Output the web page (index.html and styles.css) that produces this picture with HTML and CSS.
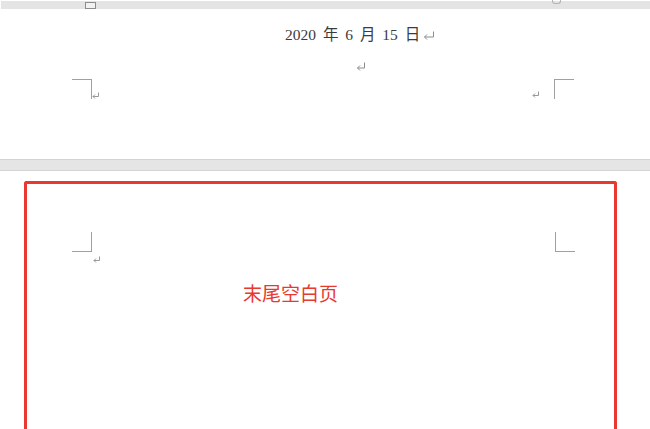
FILE: index.html
```html
<!DOCTYPE html>
<html lang="zh-CN">
<head>
<meta charset="utf-8">
<title>末尾空白页</title>
<link rel="stylesheet" href="styles.css">
</head>
<body>
<div class="view">
  <div class="topbar">
    <span class="marker-box"></span>
    <span class="marker-tab"></span>
  </div>

  <div class="page page-end">
    <div class="date-line">
      <span class="date">2020 年 6 月 15 日</span>
      <svg class="pmark pmark-lg" viewBox="0 0 12 9" aria-hidden="true"><path d="M10.5 0.5 V6 H1.5 M4 3.5 L1.5 6 L4 8.5" fill="none" stroke="#8c8c8c" stroke-width="1"/></svg>
    </div>
    <div class="empty-line">
      <svg class="pmark pmark-md" viewBox="0 0 10 9" aria-hidden="true"><path d="M8.5 0.5 V6 H1.5 M4 3.5 L1.5 6 L4 8.5" fill="none" stroke="#8c8c8c" stroke-width="1"/></svg>
    </div>
    <div class="corner-row">
      <div class="corner-group">
        <span class="corner corner-bl"></span>
        <svg class="pmark pmark-sm" viewBox="0 0 8 7" aria-hidden="true"><path d="M6.5 0.5 V4.5 H1 M3 2.5 L1 4.5 L3 6.5" fill="none" stroke="#999" stroke-width="1"/></svg>
      </div>
      <div class="corner-group right">
        <svg class="pmark pmark-sm" viewBox="0 0 8 7" aria-hidden="true"><path d="M6.5 0.5 V4.5 H1 M3 2.5 L1 4.5 L3 6.5" fill="none" stroke="#999" stroke-width="1"/></svg>
        <span class="corner corner-br"></span>
      </div>
    </div>
  </div>

  <div class="page-gap"></div>

  <div class="page page-blank">
    <div class="highlight">
      <div class="corner-row top">
        <div class="corner-group">
          <span class="corner corner-tl"></span>
          <svg class="pmark pmark-sm below" viewBox="0 0 8 7" aria-hidden="true"><path d="M6.5 0.5 V4.5 H1 M3 2.5 L1 4.5 L3 6.5" fill="none" stroke="#999" stroke-width="1"/></svg>
        </div>
        <div class="corner-group right">
          <span class="corner corner-tr"></span>
        </div>
      </div>
      <p class="note">末尾空白页</p>
    </div>
  </div>
</div>
</body>
</html>
```

FILE: styles.css
```css
* { box-sizing: border-box; }
html, body { margin: 0; padding: 0; background: #ffffff; }
body { width: 650px; height: 429px; overflow: hidden; font-family: "Noto Sans CJK SC", sans-serif; }
.view { width: 650px; height: 429px; overflow: hidden; }

.topbar {
  margin: 1px 0 0 1px;
  height: 8px;
  background: #e4e4e4;
  display: flex;
  align-items: flex-start;
}
.marker-box {
  margin: 1px 0 0 84px;
  width: 11px;
  height: 7px;
  border: 1px solid #8c8c8c;
  background: #f1f1f1;
}
.marker-tab {
  margin: -1px 0 0 456px;
  width: 9px;
  height: 4px;
  border: 1px solid #b4b4b4;
  border-top: none;
  border-radius: 0 0 3px 3px;
}

.page { background: #ffffff; }
.page-end {
  height: 150px;
  padding-top: 16px;
}
.date-line {
  display: flex;
  align-items: center;
  height: 20px;
  padding-left: 285px;
}
.date {
  font-family: "Liberation Serif", "Noto Sans CJK SC", serif;
  font-size: 15.5px;
  line-height: 20px;
  color: #3c3c3c;
  word-spacing: 3px;
  white-space: pre;
}
.pmark { display: block; flex: none; }
.pmark-lg { width: 12px; height: 9px; margin-left: 3px; margin-top: 1px; }
.empty-line {
  height: 20px;
  margin-top: 11px;
  padding-left: 356px;
  display: flex;
  align-items: center;
}
.pmark-md { width: 10px; height: 9px; }
.pmark-sm { width: 8px; height: 7px; }

.corner-row {
  display: flex;
  justify-content: space-between;
  margin-top: 3px;
  padding: 0 76px 0 72px;
}
.corner-group { display: flex; align-items: flex-end; }
.corner-group.right .pmark-sm { margin-right: 14px; margin-bottom: 1px; }
.corner { display: block; width: 20px; height: 20px; border: 0 solid #a0a0a0; }
.corner-bl { border-top-width: 1px; border-right-width: 1px; }
.corner-br { border-top-width: 1px; border-left-width: 1px; }
.corner-tl { border-bottom-width: 1px; border-right-width: 1px; }
.corner-tr { border-bottom-width: 1px; border-left-width: 1px; }

.page-gap {
  height: 12px;
  background: #e5e5e5;
  border-top: 1px solid #d4d4d4;
  border-bottom: 1px solid #d4d4d4;
}

.page-blank { padding: 10px 33px 0 24px; }
.highlight {
  height: 260px;
  border: 3px solid #e9382f;
  border-bottom: none;
  border-radius: 3px 3px 0 0;
  padding-top: 48px;
}
.highlight .corner-row { margin-top: 0; padding: 0 39px 0 45px; align-items: flex-start; }
.highlight .corner-group { align-items: flex-start; }
.pmark-sm.below { margin-top: 24px; margin-left: 1px; }
.note {
  margin: 18px 0 0 216px;
  font-family: "Noto Sans CJK SC", sans-serif;
  font-size: 19px;
  line-height: 24px;
  color: #e8392f;
}
```
